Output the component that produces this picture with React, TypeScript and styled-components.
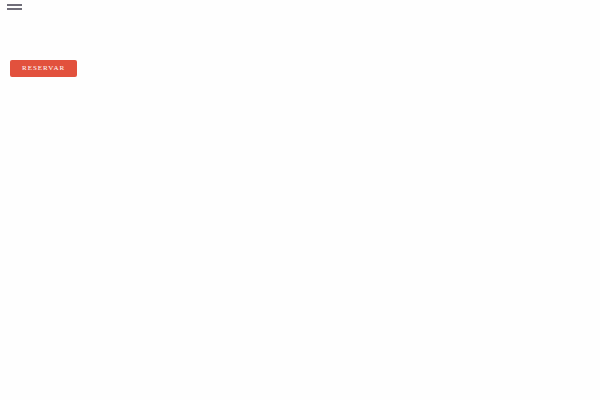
import * as React from "react";
import styled, { createGlobalStyle } from "styled-components";

const GlobalStyle = createGlobalStyle`
  * {
    box-sizing: border-box;
  }

  body {
    margin: 0;
    background-color: #fefefe;
    font-family: "Liberation Serif", "Times New Roman", serif;
  }
`;

const Header = styled.header`
  display: flex;
  padding: 4px 7px;
`;

const MenuButton = styled.button`
  display: flex;
  flex-direction: column;
  gap: 2px;
  width: 15px;
  padding: 0;
  border: none;
  background: none;
  cursor: pointer;
`;

const MenuBar = styled.span`
  width: 100%;
  height: 2px;
  background-color: #6f6d78;
`;

const Main = styled.main`
  display: flex;
  padding: 46px 10px;
`;

const BookingLink = styled.a`
  padding: 4px 12px;
  border-radius: 2px;
  background-color: #e2513d;
  color: #fff;
  font-size: 7px;
  font-weight: 400;
  line-height: 9px;
  letter-spacing: 1px;
  text-decoration: none;
  text-transform: uppercase;
`;

const App: React.FC = () => (
  <>
    <GlobalStyle />
    <Header>
      <MenuButton type="button" aria-label="Menú">
        <MenuBar />
        <MenuBar />
      </MenuButton>
    </Header>
    <Main>
      <BookingLink href="#">Reservar</BookingLink>
    </Main>
  </>
);

export default App;
